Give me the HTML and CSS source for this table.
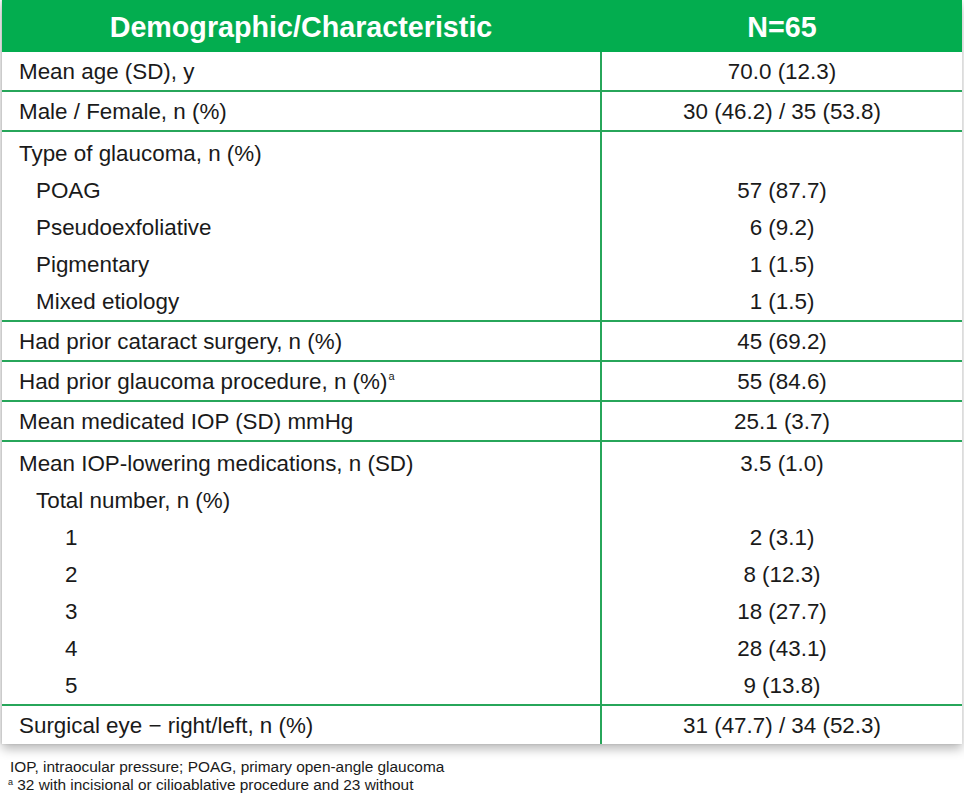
FILE: index.html
```html
<!DOCTYPE html>
<html lang="en">
<head>
<meta charset="utf-8">
<title>Demographics</title>
<link rel="stylesheet" href="styles.css">
</head>
<body>
<div class="table">
  <div class="row head">
    <div class="cell">Demographic/Characteristic</div>
    <div class="cell">N=65</div>
  </div>
  <div class="row">
    <div class="cell label">Mean age (SD), y</div>
    <div class="cell val">70.0 (12.3)</div>
  </div>
  <div class="row">
    <div class="cell label">Male / Female, n (%)</div>
    <div class="cell val">30 (46.2) / 35 (53.8)</div>
  </div>
  <div class="row group">
    <div class="cell label">
      <div class="line">Type of glaucoma, n (%)</div>
      <div class="line l2">POAG</div>
      <div class="line l2">Pseudoexfoliative</div>
      <div class="line l2">Pigmentary</div>
      <div class="line l2">Mixed etiology</div>
    </div>
    <div class="cell val">
      <div class="line">&nbsp;</div>
      <div class="line">57 (87.7)</div>
      <div class="line">6 (9.2)</div>
      <div class="line">1 (1.5)</div>
      <div class="line">1 (1.5)</div>
    </div>
  </div>
  <div class="row">
    <div class="cell label">Had prior cataract surgery, n (%)</div>
    <div class="cell val">45 (69.2)</div>
  </div>
  <div class="row">
    <div class="cell label">Had prior glaucoma procedure, n (%)<sup class="sup">a</sup></div>
    <div class="cell val">55 (84.6)</div>
  </div>
  <div class="row">
    <div class="cell label">Mean medicated IOP (SD) mmHg</div>
    <div class="cell val">25.1 (3.7)</div>
  </div>
  <div class="row group">
    <div class="cell label">
      <div class="line">Mean IOP-lowering medications, n (SD)</div>
      <div class="line l2">Total number, n (%)</div>
      <div class="line l3">1</div>
      <div class="line l3">2</div>
      <div class="line l3">3</div>
      <div class="line l3">4</div>
      <div class="line l3">5</div>
    </div>
    <div class="cell val">
      <div class="line">3.5 (1.0)</div>
      <div class="line">&nbsp;</div>
      <div class="line">2 (3.1)</div>
      <div class="line">8 (12.3)</div>
      <div class="line">18 (27.7)</div>
      <div class="line">28 (43.1)</div>
      <div class="line">9 (13.8)</div>
    </div>
  </div>
  <div class="row last">
    <div class="cell label">Surgical eye − right/left, n (%)</div>
    <div class="cell val">31 (47.7) / 34 (52.3)</div>
  </div>
</div>
<div class="notes">
  <div class="note">IOP, intraocular pressure; POAG, primary open-angle glaucoma</div>
  <div class="note"><sup class="nsup">a</sup> 32 with incisional or cilioablative procedure and 23 without</div>
</div>
</body>
</html>
```

FILE: styles.css
```css
html, body {
  margin: 0;
  padding: 0;
  background: #ffffff;
}
body {
  font-family: "Liberation Sans", Arial, Helvetica, sans-serif;
  color: #1a1a1a;
  width: 964px;
  height: 798px;
  overflow: hidden;
}
.table {
  width: 960px;
  margin-left: 2px;
  background: #ffffff;
  box-shadow: 0 5px 10px rgba(0, 0, 0, 0.28), -1px 0 2px rgba(0, 0, 0, 0.12);
}
.row {
  display: grid;
  grid-template-columns: 600px 360px;
  border-bottom: 2px solid #27a65a;
  font-size: 22.4px;
}
.row .cell {
  height: 38px;
  line-height: 39px;
  white-space: nowrap;
}
.row .cell:first-child {
  border-right: 2px solid #27a65a;
}
.label {
  padding-left: 17px;
}
.val {
  text-align: center;
}
.head {
  background: #03ad4f;
  border-bottom: none;
  color: #ffffff;
  font-weight: bold;
  font-size: 28.7px;
}
.head .cell {
  height: 52px;
  line-height: 54px;
  text-align: center;
}
.head .cell:first-child {
  border-right: none;
  width: 598px;
}
.group .cell {
  height: auto;
  line-height: normal;
  padding-top: 3px;
}
.line {
  height: 37px;
  line-height: 38px;
  white-space: nowrap;
}
.l2 {
  padding-left: 17px;
}
.l3 {
  padding-left: 46px;
}
.last {
  border-bottom: none;
}
.sup {
  font-size: 11px;
  vertical-align: 9px;
  line-height: 0;
  margin-left: 1px;
}
.notes {
  margin-top: 14px;
  padding-left: 10px;
  font-size: 15.4px;
  color: #1a1a1a;
}
.note {
  line-height: 18px;
  white-space: nowrap;
}
.nsup {
  font-size: 9px;
  vertical-align: 5px;
  line-height: 0;
  margin-left: -2px;
}
```
